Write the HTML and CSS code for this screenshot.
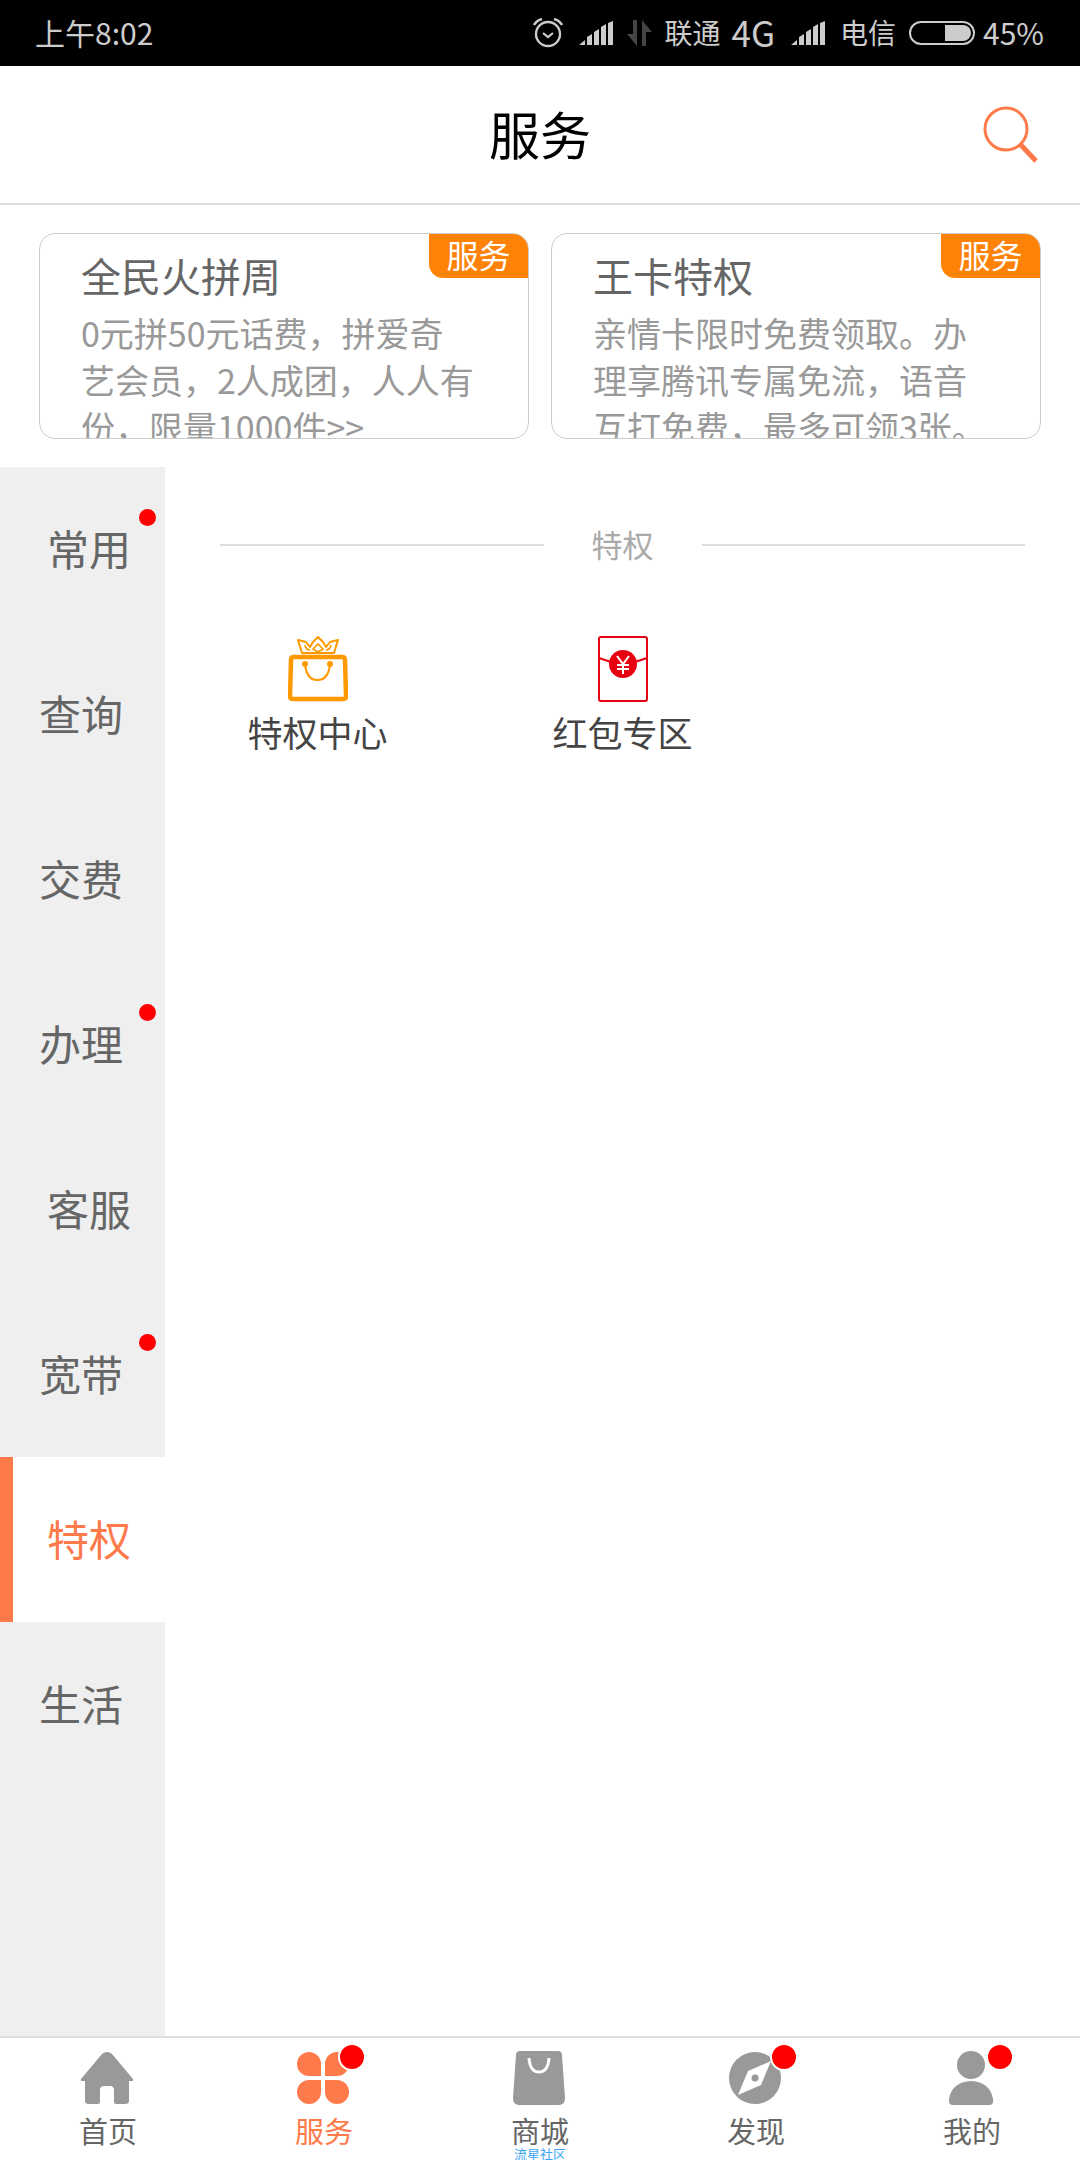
FILE: index.html
```html
<!DOCTYPE html>
<html lang="zh-CN">
<head>
    <meta charset="UTF-8">
    <meta name="viewport" content="width=device-width, initial-scale=1.0">
    <title>服务</title>
    <link rel="stylesheet" href="styles.css">
</head>
<body>
    <div class="status-bar">
        <span class="status-time">上午8:02</span>
        <div class="status-right">
            <svg class="ic-alarm" width="30" height="30" viewBox="0 0 30 30">
                <circle cx="15" cy="16" r="12" fill="none" stroke="#ccc" stroke-width="2.4"/>
                <path d="M10 15l5 4 5-4" fill="none" stroke="#ccc" stroke-width="2.2"/>
                <path d="M1 7q3-5 8-6M29 7q-3-5-8-6" fill="none" stroke="#ccc" stroke-width="2.4"/>
            </svg>
            <svg class="ic-signal" width="34" height="24" viewBox="0 0 34 24">
                <path d="M0 24l6-5v5zM8 24v-8l5-3v11zM15 24v-13l5-3v16zM22 24v-18l5-3v21zM29 24v-22l5-2v24z" fill="#ccc"/>
            </svg>
            <svg class="ic-arrows" width="25" height="26" viewBox="0 0 25 26">
                <path d="M10 0v26l-10-12h6v-14zM15 26v-26l10 12h-6v14z" fill="#444"/>
            </svg>
            <span class="status-text carrier-one">联通</span>
            <span class="status-text net">4G</span>
            <svg class="ic-signal" width="34" height="24" viewBox="0 0 34 24">
                <path d="M0 24l6-5v5zM8 24v-8l5-3v11zM15 24v-13l5-3v16zM22 24v-18l5-3v21zM29 24v-22l5-2v24z" fill="#ccc"/>
            </svg>
            <span class="status-text carrier-two">电信</span>
            <svg class="ic-battery" width="66" height="24" viewBox="0 0 66 24">
                <rect x="1" y="1" width="64" height="22" rx="11" fill="none" stroke="#ccc" stroke-width="2"/>
                <path d="M36 4h18a8 8 0 0 1 0 16h-18z" fill="#ccc"/>
            </svg>
            <span class="status-text percent">45%</span>
        </div>
    </div>

    <div class="top-bar">
        <h1 class="top-title">服务</h1>
        <svg class="ic-search" width="60" height="60" viewBox="0 0 60 60">
            <circle cx="28" cy="23" r="21" fill="none" stroke="#ff7a4a" stroke-width="3"/>
            <path d="M42 38l16 17" fill="none" stroke="#ff7a4a" stroke-width="5"/>
        </svg>
    </div>

    <div class="banner-row">
        <div class="banner-card">
            <span class="banner-tag">服务</span>
            <p class="banner-title">全民火拼周</p>
            <p class="banner-desc">0元拼50元话费，拼爱奇<br>艺会员，2人成团，人人有<br>份，限量1000件&gt;&gt;</p>
        </div>
        <div class="banner-card">
            <span class="banner-tag">服务</span>
            <p class="banner-title">王卡特权</p>
            <p class="banner-desc">亲情卡限时免费领取。办<br>理享腾讯专属免流，语音<br>互打免费，最多可领3张。</p>
        </div>
    </div>

    <div class="main">
        <div class="side-menu">
            <div class="side-item shift">常用<i class="side-dot"></i></div>
            <div class="side-item">查询</div>
            <div class="side-item">交费</div>
            <div class="side-item">办理<i class="side-dot"></i></div>
            <div class="side-item shift">客服</div>
            <div class="side-item">宽带<i class="side-dot"></i></div>
            <div class="side-item shift active">特权</div>
            <div class="side-item">生活</div>
        </div>
        <div class="content">
            <div class="section-head">
                <span class="section-line"></span>
                <span class="section-name">特权</span>
                <span class="section-line"></span>
            </div>
            <div class="service-grid">
                <div class="service-item">
                    <svg width="60" height="66" viewBox="0 0 60 66">
                        <path d="M14 17h32l4-13-8 2-4 5-3-5-5-5-5 5-3 5-4-5-8-2z" fill="none" stroke="#f90" stroke-width="2" stroke-linejoin="round"/>
                        <path d="M25 13l5-5 5 5-5 3zM17 9q1 5 5 5M43 9q-1 5-5 5" fill="none" stroke="#f90" stroke-width="1.6"/>
                        <path d="M6 21h48q3 0 3 3l1 36q0 3-3 3h-50q-3 0-3-3l1-36q0-3 3-3z" fill="none" stroke="#f90" stroke-width="4.5"/>
                        <path d="M17 29q2 15 12.5 15t12.5-15" fill="none" stroke="#f90" stroke-width="2"/>
                        <circle cx="17" cy="28" r="3" fill="#f90"/>
                        <circle cx="42" cy="28" r="3" fill="#f90"/>
                    </svg>
                    <span class="service-name">特权中心</span>
                </div>
                <div class="service-item">
                    <svg width="50" height="66" viewBox="0 0 50 66">
                        <rect x="1" y="1" width="48" height="64" rx="2" fill="#fff" stroke="#e60012" stroke-width="2"/>
                        <path d="M1 22l12 4M49 22l-12 4" fill="none" stroke="#e60012" stroke-width="2"/>
                        <circle cx="25" cy="28" r="14" fill="#e60012"/>
                        <path d="M19 20l6 8 6-8M25 28v10M19 29h12M19 33h12" fill="none" stroke="#fff" stroke-width="2"/>
                    </svg>
                    <span class="service-name">红包专区</span>
                </div>
            </div>
        </div>
    </div>

    <div class="tab-bar">
        <div class="tab">
            <svg width="54" height="54" viewBox="0 0 54 54">
                <path d="M27 1q3 0 5 2l21 25q1 2-2 2h-2v20q0 3-4 3h-9q-2 0-2-2v-12q0-4-4-4h-6q-4 0-4 4v12q0 2-2 2h-9q-4 0-4-3v-20h-2q-3 0-2-2l21-25q2-2 5-2z" fill="#999"/>
            </svg>
            <span class="tab-name">首页</span>
        </div>
        <div class="tab tab-on">
            <svg width="54" height="54" viewBox="0 0 54 54">
                <path d="M13 1a12 12 0 0 1 12 12v12h-12a12 12 0 0 1 0-24zM41 1a12 12 0 0 0-12 12v12h12a12 12 0 0 0 0-24zM13 53a12 12 0 0 0 12-12v-12h-12a12 12 0 0 0 0 24zM41 53a12 12 0 0 1-12-12v-12h12a12 12 0 0 1 0 24z" fill="#ff7a4a"/>
            </svg>
            <span class="tab-name">服务</span>
            <i class="tab-dot"></i>
        </div>
        <div class="tab">
            <svg width="54" height="54" viewBox="0 0 54 54">
                <path d="M8 0h38q4 0 4 4l3 43q0 7-6 7h-40q-6 0-6-7l3-43q0-4 4-4z" fill="#999"/>
                <path d="M17 7q1 14 10 14t10-14" fill="none" stroke="#fff" stroke-width="3"/>
            </svg>
            <span class="tab-name">商城</span>
            <span class="tab-sub">流星社区</span>
        </div>
        <div class="tab">
            <svg width="54" height="54" viewBox="0 0 54 54">
                <circle cx="27" cy="27" r="26" fill="#999"/>
                <path d="M43 10l-10 24-23 10 10-24z" fill="#fff"/>
                <circle cx="27" cy="27" r="3.5" fill="#999"/>
            </svg>
            <span class="tab-name">发现</span>
            <i class="tab-dot"></i>
        </div>
        <div class="tab">
            <svg width="54" height="54" viewBox="0 0 54 54">
                <circle cx="27" cy="14" r="14" fill="#999"/>
                <path d="M9 54q-5 0-4-6 3-17 22-18 19 1 22 18 1 6-4 6z" fill="#999"/>
            </svg>
            <span class="tab-name">我的</span>
            <i class="tab-dot"></i>
        </div>
    </div>
</body>
</html>
```

FILE: styles.css
```css
* {
    box-sizing: border-box;
}
body {
    margin: 0;
    width: 1080px;
    height: 2160px;
    display: flex;
    flex-direction: column;
    background-color: #fff;
    font-family: "Noto Sans CJK SC", "Noto Sans", sans-serif;
    overflow: hidden;
}
p, h1 {
    margin: 0;
    font-weight: normal;
}

/* status bar */
.status-bar {
    height: 66px;
    flex: none;
    display: flex;
    align-items: center;
    justify-content: space-between;
    padding: 0 36px 0 35px;
    background-color: #000;
    color: #ccc;
}
.status-time {
    font-size: 30px;
    margin-top: -3px;
}
.status-right {
    display: flex;
    align-items: center;
}
.status-text {
    font-size: 28px;
    margin-top: -3px;
}
.ic-signal {
    margin-left: 16px;
}
.ic-arrows {
    margin-left: 14px;
}
.carrier-one {
    margin-left: 12px;
}
.net {
    margin-left: 11px;
    font-size: 35px;
}
.carrier-two {
    margin-left: 15px;
}
.ic-battery {
    margin-left: 13px;
}
.percent {
    margin-left: 8px;
    font-size: 30px;
}

/* header */
.top-bar {
    height: 139px;
    flex: none;
    position: relative;
    display: flex;
    align-items: center;
    justify-content: center;
    padding-bottom: 4px;
    border-bottom: 2px solid #ddd;
}
.top-title {
    font-size: 51px;
    color: #000;
}
.ic-search {
    position: absolute;
    right: 42px;
    top: 40px;
}

/* banner cards */
.banner-row {
    flex: none;
    height: 262px;
    display: flex;
    gap: 22px;
    padding: 28px 39px 0;
}
.banner-card {
    position: relative;
    width: 490px;
    height: 206px;
    padding: 13px 0 0 41px;
    border: 1px solid #ccc;
    border-radius: 16px;
    overflow: hidden;
}
.banner-tag {
    position: absolute;
    top: 0;
    right: 0;
    width: 99px;
    height: 44px;
    line-height: 41px;
    text-align: center;
    font-size: 32px;
    color: #fff;
    background-color: #ff8208;
    border-bottom-left-radius: 14px;
}
.banner-title {
    font-size: 40px;
    line-height: 56px;
    color: #666;
}
.banner-desc {
    margin-top: 6px;
    font-size: 34px;
    line-height: 47px;
    color: #999;
    white-space: nowrap;
}

/* side menu + content */
.main {
    flex: 1;
    display: flex;
    min-height: 0;
}
.side-menu {
    width: 165px;
    flex: none;
    background-color: #efefef;
}
.side-item {
    position: relative;
    height: 165px;
    display: flex;
    align-items: center;
    padding: 0 0 5px 39px;
    font-size: 42px;
    color: #666;
}
.side-item.shift {
    padding-left: 47px;
}
.side-item.active {
    color: #ff7a4a;
    background-color: #fff;
    border-left: 13px solid #ff7a4a;
    padding-left: 34px;
}
.side-dot {
    position: absolute;
    left: 139px;
    top: 42px;
    width: 17px;
    height: 17px;
    border-radius: 50%;
    background-color: #f00;
}
.content {
    flex: 1;
    min-width: 0;
}
.section-head {
    display: flex;
    align-items: center;
    height: 44px;
    margin: 57px 55px 0;
}
.section-line {
    flex: 1;
    height: 2px;
    margin-top: -2px;
    background-color: #ddd;
}
.section-name {
    width: 158px;
    padding-bottom: 6px;
    text-align: center;
    font-size: 31px;
    color: #aaa;
}
.service-grid {
    display: grid;
    grid-template-columns: repeat(3, 1fr);
    margin-top: 68px;
}
.service-item {
    display: flex;
    flex-direction: column;
    align-items: center;
}
.service-name {
    margin-top: 5px;
    font-size: 35px;
    line-height: 50px;
    color: #444;
}

/* bottom tabs */
.tab-bar {
    flex: none;
    height: 124px;
    display: flex;
    border-top: 2px solid #ddd;
    background-color: #fff;
}
.tab {
    position: relative;
    flex: 1;
    display: flex;
    flex-direction: column;
    align-items: center;
    padding-top: 13px;
}
.tab svg {
    margin-left: -2px;
}
.tab-name {
    margin-top: 7px;
    font-size: 29px;
    line-height: 36px;
    color: #666;
}
.tab-on .tab-name {
    color: #ff7a4a;
}
.tab-sub {
    position: absolute;
    top: 108px;
    font-size: 13px;
    line-height: 15px;
    color: #3ba5f5;
}
.tab-dot {
    position: absolute;
    left: 122px;
    top: 5px;
    width: 28px;
    height: 28px;
    border: 2px solid #fff;
    border-radius: 50%;
    background-color: #f00;
}
```
